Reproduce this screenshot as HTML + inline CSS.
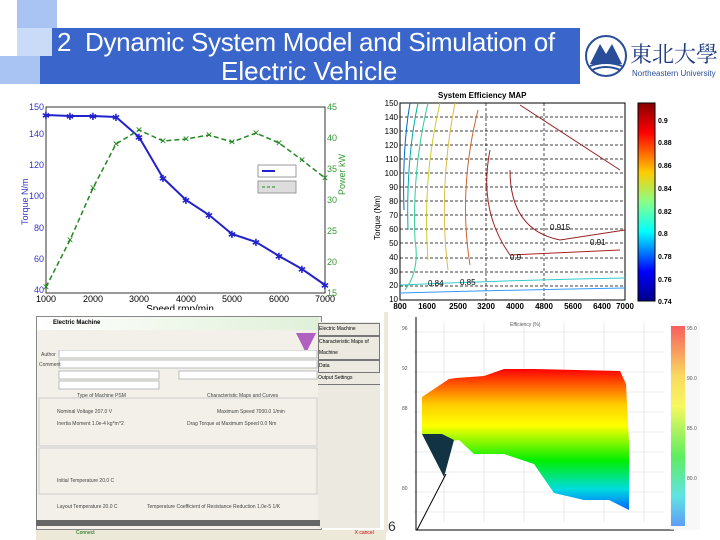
<!DOCTYPE html>
<html><head><meta charset="utf-8"><style>
body{margin:0;width:720px;height:540px;overflow:hidden;background:#fff;font-family:"Liberation Sans",sans-serif;position:relative}
.a{position:absolute}
</style></head><body>
<div class="a" style="left:17px;top:0;width:40px;height:28px;background:#a9c3f2"></div>
<div class="a" style="left:17px;top:28px;width:40px;height:28px;background:#c9dbf7"></div>
<div class="a" style="left:0;top:56px;width:40px;height:28px;background:#a9c3f2"></div>
<div class="a" style="left:52px;top:28px;width:528px;height:56px;background:#3a66cc"></div>
<div class="a" style="left:40px;top:56px;width:20px;height:28px;background:#3a66cc"></div>
<div class="a" style="left:57px;top:27px;color:#fff;font-size:26px;line-height:30px;white-space:nowrap;letter-spacing:-0.3px">2&nbsp; Dynamic System Model and Simulation of</div>
<div class="a" style="left:221px;top:56px;color:#fff;font-size:26px;line-height:30px;white-space:nowrap">Electric Vehicle</div>
<div class="a" style="left:582px;top:28px;width:138px;height:56px;background:#fff"></div>
<svg class="a" style="left:584px;top:32px" width="136" height="50">
<circle cx="22" cy="24" r="20" fill="#fff" stroke="#2a4d99" stroke-width="2"/>
<path d="M6 32 L16 12 L22 22 L28 12 L38 32Z" fill="#2a4d99"/>
<path d="M6 34 Q22 28 38 34 M8 38 Q22 32 36 38" stroke="#2a4d99" stroke-width="2" fill="none"/>
<text x="46" y="30" font-family="Noto Serif CJK SC,serif" font-size="22" fill="#1f3c80">東北大學</text>
<text x="48" y="44" font-size="8" fill="#2a4d99">Northeastern University</text>
</svg>

<svg class="a" style="left:0;top:95px" width="360" height="215" font-size="9">
<rect x="46" y="12" width="279" height="186" fill="#fff" stroke="#333"/>
<g fill="#33c" text-anchor="end">
<text x="44" y="15">150</text><text x="44" y="42">140</text><text x="44" y="73">120</text><text x="44" y="104">100</text><text x="44" y="136">80</text><text x="44" y="167">60</text><text x="44" y="198">40</text></g>
<g fill="#393"><text x="327" y="15">45</text><text x="327" y="46">40</text><text x="327" y="77">35</text><text x="327" y="108">30</text><text x="327" y="139">25</text><text x="327" y="170">20</text><text x="327" y="201">15</text></g>
<g fill="#000" text-anchor="middle"><text x="46" y="207">1000</text><text x="93" y="207">2000</text><text x="139" y="207">3000</text><text x="186" y="207">4000</text><text x="232" y="207">5000</text><text x="279" y="207">6000</text><text x="325" y="207">7000</text>
<text x="180" y="217" font-size="10">Speed rmp/min</text></g>
<text x="28" y="130" fill="#33c" transform="rotate(-90 28 130)">Torque N/m</text>
<text x="345" y="100" fill="#393" transform="rotate(-90 345 100)">Power kW</text>
<polyline fill="none" stroke="#22c" stroke-width="2" points="46,20 70,21 93,21 116,22 139,42 163,83 186,105 209,120 232,139 256,147 279,161 302,174 325,190"/>
<g fill="#22c" font-size="10" text-anchor="middle"><text x="46" y="24">✱</text><text x="70" y="25">✱</text><text x="93" y="25">✱</text><text x="116" y="26">✱</text><text x="139" y="46">✱</text><text x="163" y="87">✱</text><text x="186" y="109">✱</text><text x="209" y="124">✱</text><text x="232" y="143">✱</text><text x="256" y="151">✱</text><text x="279" y="165">✱</text><text x="302" y="178">✱</text><text x="325" y="194">✱</text></g>
<polyline fill="none" stroke="#282" stroke-width="1.5" stroke-dasharray="5,3" points="46,192 70,145 93,93 116,49 139,35 163,46 186,44 209,40 232,47 256,38 279,48 302,65 325,83"/>
<g fill="#282" font-size="9" text-anchor="middle"><text x="46" y="195">✕</text><text x="70" y="148">✕</text><text x="93" y="96">✕</text><text x="116" y="52">✕</text><text x="139" y="38">✕</text><text x="163" y="49">✕</text><text x="186" y="47">✕</text><text x="209" y="43">✕</text><text x="232" y="50">✕</text><text x="256" y="41">✕</text><text x="279" y="51">✕</text><text x="302" y="68">✕</text><text x="325" y="86">✕</text></g>
<rect x="258" y="70" width="38" height="12" fill="#fff" stroke="#999"/><line x1="262" y1="76" x2="275" y2="76" stroke="#22c" stroke-width="2"/>
<rect x="258" y="86" width="38" height="12" fill="#ddd" stroke="#999"/><line x1="262" y1="92" x2="275" y2="92" stroke="#282" stroke-dasharray="3,2"/>
</svg>

<svg class="a" style="left:360px;top:90px" width="360" height="225" font-size="8" font-weight="bold">
<text x="78" y="8">System Efficiency MAP</text>
<rect x="40" y="13" width="225" height="197" fill="#fff" stroke="#000"/>
<g stroke="#000" stroke-dasharray="3,2" stroke-width=".7">
<line x1="40" y1="27" x2="265" y2="27"/><line x1="40" y1="41" x2="265" y2="41"/><line x1="40" y1="55" x2="265" y2="55"/><line x1="40" y1="69" x2="265" y2="69"/><line x1="40" y1="83" x2="265" y2="83"/><line x1="40" y1="97" x2="265" y2="97"/><line x1="40" y1="111" x2="265" y2="111"/><line x1="40" y1="125" x2="265" y2="125"/><line x1="40" y1="139" x2="265" y2="139"/><line x1="40" y1="153" x2="265" y2="153"/><line x1="40" y1="168" x2="265" y2="168"/><line x1="40" y1="182" x2="265" y2="182"/><line x1="40" y1="196" x2="265" y2="196"/>
<line x1="126" y1="13" x2="126" y2="210"/><line x1="184" y1="13" x2="184" y2="210"/></g>
<g fill="none" stroke-width="1">
<path d="M50 13 Q42 60 44 120" stroke="#06c"/><path d="M58 13 Q46 70 48 140" stroke="#0aa"/><path d="M68 13 Q52 80 55 150 Q60 180 45 200" stroke="#3c9"/>
<path d="M80 13 Q62 90 68 170" stroke="#cc3"/><path d="M95 13 Q78 100 88 180" stroke="#db4"/><path d="M118 20 Q98 100 110 175" stroke="#c63"/>
<path d="M130 60 Q118 120 150 165 L260 160" stroke="#a22"/><path d="M150 80 Q150 140 200 150 L265 140" stroke="#922"/>
<path d="M160 15 L260 80" stroke="#922"/><path d="M40 195 Q150 190 265 188" stroke="#3cc"/><path d="M40 203 Q150 200 265 198" stroke="#39f"/></g>
<g font-weight="normal" text-anchor="end"><text x="38" y="16">150</text><text x="38" y="30">140</text><text x="38" y="44">130</text><text x="38" y="58">120</text><text x="38" y="72">110</text><text x="38" y="86">100</text><text x="38" y="100">90</text><text x="38" y="114">80</text><text x="38" y="128">70</text><text x="38" y="142">60</text><text x="38" y="156">50</text><text x="38" y="170">40</text><text x="38" y="184">30</text><text x="38" y="198">20</text><text x="38" y="212">10</text></g>
<g font-weight="normal"><text x="230" y="155">0.91</text><text x="190" y="140">0.915</text><text x="150" y="170">0.9</text><text x="100" y="195">0.85</text><text x="68" y="196">0.84</text></g>
<text x="20" y="150" font-weight="normal" transform="rotate(-90 20 150)">Torque (Nm)</text>
<g text-anchor="middle"><text x="40" y="219">800</text><text x="67" y="219">1600</text><text x="98" y="219">2500</text><text x="126" y="219">3200</text><text x="155" y="219">4000</text><text x="184" y="219">4800</text><text x="213" y="219">5600</text><text x="242" y="219">6400</text><text x="265" y="219">7000</text></g>
<defs><linearGradient id="j" x1="0" y1="0" x2="0" y2="1"><stop offset="0" stop-color="#800"/><stop offset=".15" stop-color="#f00"/><stop offset=".35" stop-color="#fc0"/><stop offset=".5" stop-color="#8f8"/><stop offset=".65" stop-color="#0ff"/><stop offset=".85" stop-color="#00f"/><stop offset="1" stop-color="#008"/></linearGradient></defs>
<rect x="278" y="13" width="17" height="198" fill="url(#j)" stroke="#000"/>
<g font-size="7"><text x="298" y="33">0.9</text><text x="298" y="55">0.88</text><text x="298" y="78">0.86</text><text x="298" y="101">0.84</text><text x="298" y="124">0.82</text><text x="298" y="146">0.8</text><text x="298" y="169">0.78</text><text x="298" y="192">0.76</text><text x="298" y="214">0.74</text></g>
</svg>

<div class="a" style="left:36px;top:316px;width:284px;height:212px;background:#f2f0e8;border:1px solid #888"></div>
<div class="a" style="left:37px;top:317px;width:282px;height:13px;background:linear-gradient(90deg,#fff,#dff0d8);font-size:6px;font-weight:bold;line-height:13px;padding-left:16px;box-sizing:border-box">Electric Machine</div>
<div class="a" style="left:296px;top:333px;width:20px;height:20px;background:#b060c0;clip-path:polygon(0 0,100% 0,50% 100%)"></div>
<svg class="a" style="left:37px;top:350px" width="282" height="170" font-size="5" fill="#444">
<rect x="22" y="0" width="258" height="8" fill="#fff" stroke="#bbb"/><rect x="22" y="10" width="258" height="8" fill="#fff" stroke="#bbb"/>
<rect x="22" y="21" width="100" height="8" fill="#fff" stroke="#bbb"/><rect x="142" y="21" width="138" height="8" fill="#fff" stroke="#bbb"/>
<rect x="22" y="31" width="100" height="8" fill="#fff" stroke="#bbb"/>
<rect x="2" y="48" width="278" height="48" fill="none" stroke="#ccc"/><rect x="2" y="98" width="278" height="46" fill="none" stroke="#ccc"/>
<text x="4" y="6">Author</text><text x="2" y="16">Comment</text><text x="40" y="47">Type of Machine PSM</text><text x="170" y="47">Characteristic Maps and Curves</text>
<text x="20" y="63">Nominal Voltage  207.0 V</text><text x="180" y="63">Maximum Speed 7000.0 1/min</text>
<text x="20" y="75">Inertia Moment  1.0e-4 kg*m^2</text><text x="150" y="75">Drag Torque at Maximum Speed  0.0 Nm</text>
<text x="20" y="132">Initial Temperature 20.0 C</text><text x="20" y="158">Layout Temperature 20.0 C</text><text x="110" y="158">Temperature Coefficient of Resistance Reduction 1.0e-5 1/K</text>
</svg>
<div class="a" style="left:318px;top:322px;width:62px;height:206px;background:#eceae0;font-size:5px;line-height:11px">
<div style="border:1px solid #777;margin-top:1px">Electric Machine</div><div style="border:1px solid #777">Characteristic Maps of Machine</div><div style="border:1px solid #777">Data</div><div style="border-bottom:1px solid #777">Output Settings</div></div>
<div class="a" style="left:36px;top:520px;width:284px;height:6px;background:#666"></div>
<div class="a" style="left:36px;top:530px;width:350px;height:10px;background:#ece9d8;font-size:5px"><span style="color:#060;margin-left:40px">Connect</span><span style="color:#c00;margin-left:260px">X cancel</span></div>

<svg class="a" style="left:384px;top:312px" width="320" height="220" font-size="5" fill="#555">
<defs><linearGradient id="s" x1="0" y1="0" x2="0" y2="1"><stop offset="0" stop-color="#f00"/><stop offset=".25" stop-color="#fc0"/><stop offset=".4" stop-color="#ff0"/><stop offset=".65" stop-color="#0e0"/><stop offset=".85" stop-color="#0dd"/><stop offset="1" stop-color="#06f"/></linearGradient></defs>
<rect x="0" y="0" width="320" height="220" fill="#fff"/>
<rect x="0" y="0" width="4" height="220" fill="#ece9d8"/>
<g stroke="#ddd" stroke-width=".6">
<line x1="30" y1="20" x2="280" y2="20"/><line x1="30" y1="40" x2="280" y2="40"/><line x1="30" y1="60" x2="280" y2="60"/><line x1="30" y1="80" x2="280" y2="80"/><line x1="30" y1="100" x2="280" y2="100"/><line x1="30" y1="120" x2="280" y2="120"/><line x1="30" y1="140" x2="280" y2="140"/><line x1="30" y1="160" x2="280" y2="160"/><line x1="30" y1="180" x2="280" y2="180"/><line x1="30" y1="200" x2="280" y2="200"/>
<line x1="60" y1="10" x2="60" y2="210"/><line x1="100" y1="10" x2="100" y2="210"/><line x1="140" y1="10" x2="140" y2="210"/><line x1="180" y1="10" x2="180" y2="210"/><line x1="220" y1="10" x2="220" y2="210"/><line x1="260" y1="10" x2="260" y2="210"/></g>
<path d="M32 5 V218 H290" stroke="#000" fill="none"/><line x1="33" y1="218" x2="62" y2="162" stroke="#000"/>
<path d="M38 85 L65 67 L72 66 L100 64 L120 57 L150 57 L236 59 L242 72 L245 130 L245 198 L225 188 L200 188 L170 181 L150 152 L120 142 L90 142 L75 128 L60 130 L55 122 L38 122 Z" fill="url(#s)"/>
<path d="M38 122 L58 122 L70 128 L60 165 Z" fill="#134"/>
<text x="126" y="14">Efficiency (%)</text>
<rect x="287" y="14" width="14" height="200" fill="url(#s)"/><rect x="286" y="10" width="30" height="208" fill="#eee" opacity=".4"/>
<text x="303" y="18">95.0</text><text x="303" y="68">90.0</text><text x="303" y="118">85.0</text><text x="303" y="168">80.0</text>
<text x="18" y="18">96</text><text x="18" y="58">92</text><text x="18" y="98">88</text><text x="18" y="178">80</text>
</svg>
<div class="a" style="left:388px;top:518px;font-size:14px;color:#333">6</div>
</body></html>
